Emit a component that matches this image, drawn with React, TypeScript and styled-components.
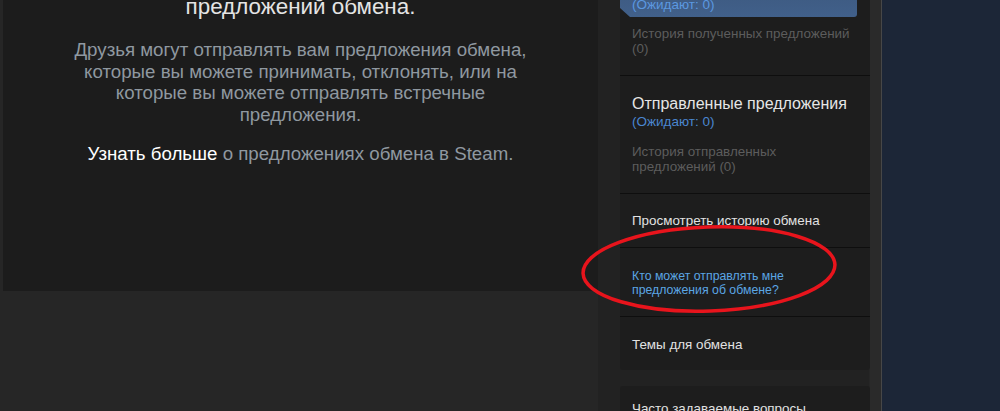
import styled, {createGlobalStyle} from "styled-components";
import {FC} from "react";

const GlobalStyle = createGlobalStyle`
  html, body {
    margin: 0;
    padding: 0;
    background: #262626;
    font-family: "Liberation Sans", Arial, sans-serif;
  }
`

type SectionItem = {
    title?: string
    count?: string
    history?: string
    link?: string
    blue?: boolean
    pad: [number, number]
}

const sections: SectionItem[] = [
    {title: "Отправленные предложения", count: "(Ожидают: 0)", history: "История отправленных предложений (0)", pad: [19, 19]},
    {link: "Просмотреть историю обмена", pad: [19, 18]},
    {link: "Кто может отправлять мне предложения об обмене?", blue: true, pad: [21, 19]},
    {link: "Темы для обмена", pad: [20, 17]},
]

export default function App() {
    return (
        <>
            <GlobalStyle/>
            <Screen>
                <Page>
                    <MainColumn>
                        <EmptyPanel>
                            <Heading>предложений обмена.</Heading>
                            <Description>
                                Друзья могут отправлять вам предложения обмена,
                                которые вы можете принимать, отклонять, или на
                                которые вы можете отправлять встречные
                                предложения.
                            </Description>
                            <LearnMore>
                                <strong>Узнать больше</strong> о предложениях обмена в Steam.
                            </LearnMore>
                        </EmptyPanel>
                    </MainColumn>
                    <Sidebar>
                        <Card>
                            <ActiveTab>
                                <TabTitle>Полученные предложения</TabTitle>
                                <TabCount>(Ожидают: 0)</TabCount>
                            </ActiveTab>
                            <History $top={9} $bottom={19}>История полученных предложений (0)</History>
                            {sections.map((s, i) => <Section key={i} item={s}/>)}
                        </Card>
                        <Card>
                            <SectionBox $top={15} $bottom={15} $first>
                                <LinkText>Часто задаваемые вопросы</LinkText>
                            </SectionBox>
                        </Card>
                    </Sidebar>
                </Page>
                <Backdrop/>
                <Annotation width="1000" height="411" viewBox="0 0 1000 411">
                    <ellipse cx="709" cy="269" rx="126" ry="42" fill="none" stroke="#e8141c" strokeWidth="3.5"
                             transform="rotate(-2 709 269)"/>
                </Annotation>
            </Screen>
        </>
    );
}

const Section: FC<{ item: SectionItem }> = ({item}) => (
    <SectionBox $top={item.pad[0]} $bottom={item.pad[1]}>
        {item.title && <SectionTitle>{item.title}</SectionTitle>}
        {item.count && <Count>{item.count}</Count>}
        {item.history && <History $top={13} $bottom={0}>{item.history}</History>}
        {item.link && <LinkText $blue={item.blue}>{item.link}</LinkText>}
    </SectionBox>
)

const Screen = styled.div`
  position: relative;
  display: flex;
  width: 1000px;
  height: 411px;
  overflow: hidden;
  background: #262626;
`
const Page = styled.div`
  display: flex;
  align-items: flex-start;
  width: 881px;
  margin-top: -40px;
  flex-shrink: 0;
`
const MainColumn = styled.div`
  width: 595px;
  padding-left: 3px;
`
const EmptyPanel = styled.div`
  background: #1c1c1c;
  height: 331px;
  box-sizing: border-box;
  padding: 34px 20px 0;
  text-align: center;
`
const Heading = styled.h2`
  margin: 0;
  font-size: 22.4px;
  line-height: 26px;
  font-weight: normal;
  color: #e4e4e4;
`
const Description = styled.p`
  margin: 19px auto 0;
  width: 482px;
  font-size: 18.7px;
  line-height: 21.6px;
  color: #8f98a0;
`
const LearnMore = styled.p`
  margin: 18px 0 0;
  font-size: 18.7px;
  line-height: 22px;
  color: #8f98a0;

  strong {
    font-weight: normal;
    color: #ffffff;
  }
`
const Sidebar = styled.div`
  width: 283px;
  min-height: 460px;
  box-sizing: border-box;
  padding: 3px 11px 0 22px;
  background: linear-gradient(to right, #222222 0, #222222 271px, #2a2a2a 272px);
  display: flex;
  flex-direction: column;
  gap: 16px;
`
const Card = styled.div`
  background: #1d1d1d;
  border-radius: 3px;
  overflow: hidden;
`
const ActiveTab = styled.div`
  margin-right: 13px;
  padding: 16px 12px 4px;
  border-radius: 0 0 3px 0;
  background: linear-gradient(to bottom, #3a5478, #41608a);
  clip-path: polygon(0 0, 100% 0, 100% 100%, 10px 100%, 0 calc(100% - 9px));
`
const TabTitle = styled.div`
  font-size: 16px;
  line-height: 18px;
  color: #ffffff;
`
const TabCount = styled.div`
  font-size: 13.5px;
  line-height: 16px;
  color: #5b98e0;
`
const SectionBox = styled.div<{ $top: number, $bottom: number, $first?: boolean }>`
  padding: ${p => p.$top}px 12px ${p => p.$bottom}px;
  border-top: ${p => p.$first ? "none" : "1px solid #0e0e0e"};
`
const SectionTitle = styled.div`
  font-size: 16px;
  line-height: 18px;
  color: #e6e6e6;
`
const Count = styled.div`
  font-size: 13.5px;
  line-height: 18px;
  color: #4a86d0;
`
const History = styled.div<{ $top: number, $bottom: number }>`
  padding: ${p => p.$top}px 12px ${p => p.$bottom}px;
  font-size: 13.4px;
  line-height: 15px;
  color: #5c5c5c;

  ${SectionBox} & {
    padding-left: 0;
    padding-right: 0;
  }
`
const LinkText = styled.div<{ $blue?: boolean }>`
  font-size: ${p => p.$blue ? 12.3 : 13.4}px;
  line-height: ${p => p.$blue ? 14 : 16}px;
  color: ${p => p.$blue ? "#5ba6e4" : "#e2e2e2"};
`
const Backdrop = styled.div`
  flex: 1;
  border-left: 1px solid #474747;
  background: #1c2637;
`
const Annotation = styled.svg`
  position: absolute;
  left: 0;
  top: 0;
  pointer-events: none;
`
